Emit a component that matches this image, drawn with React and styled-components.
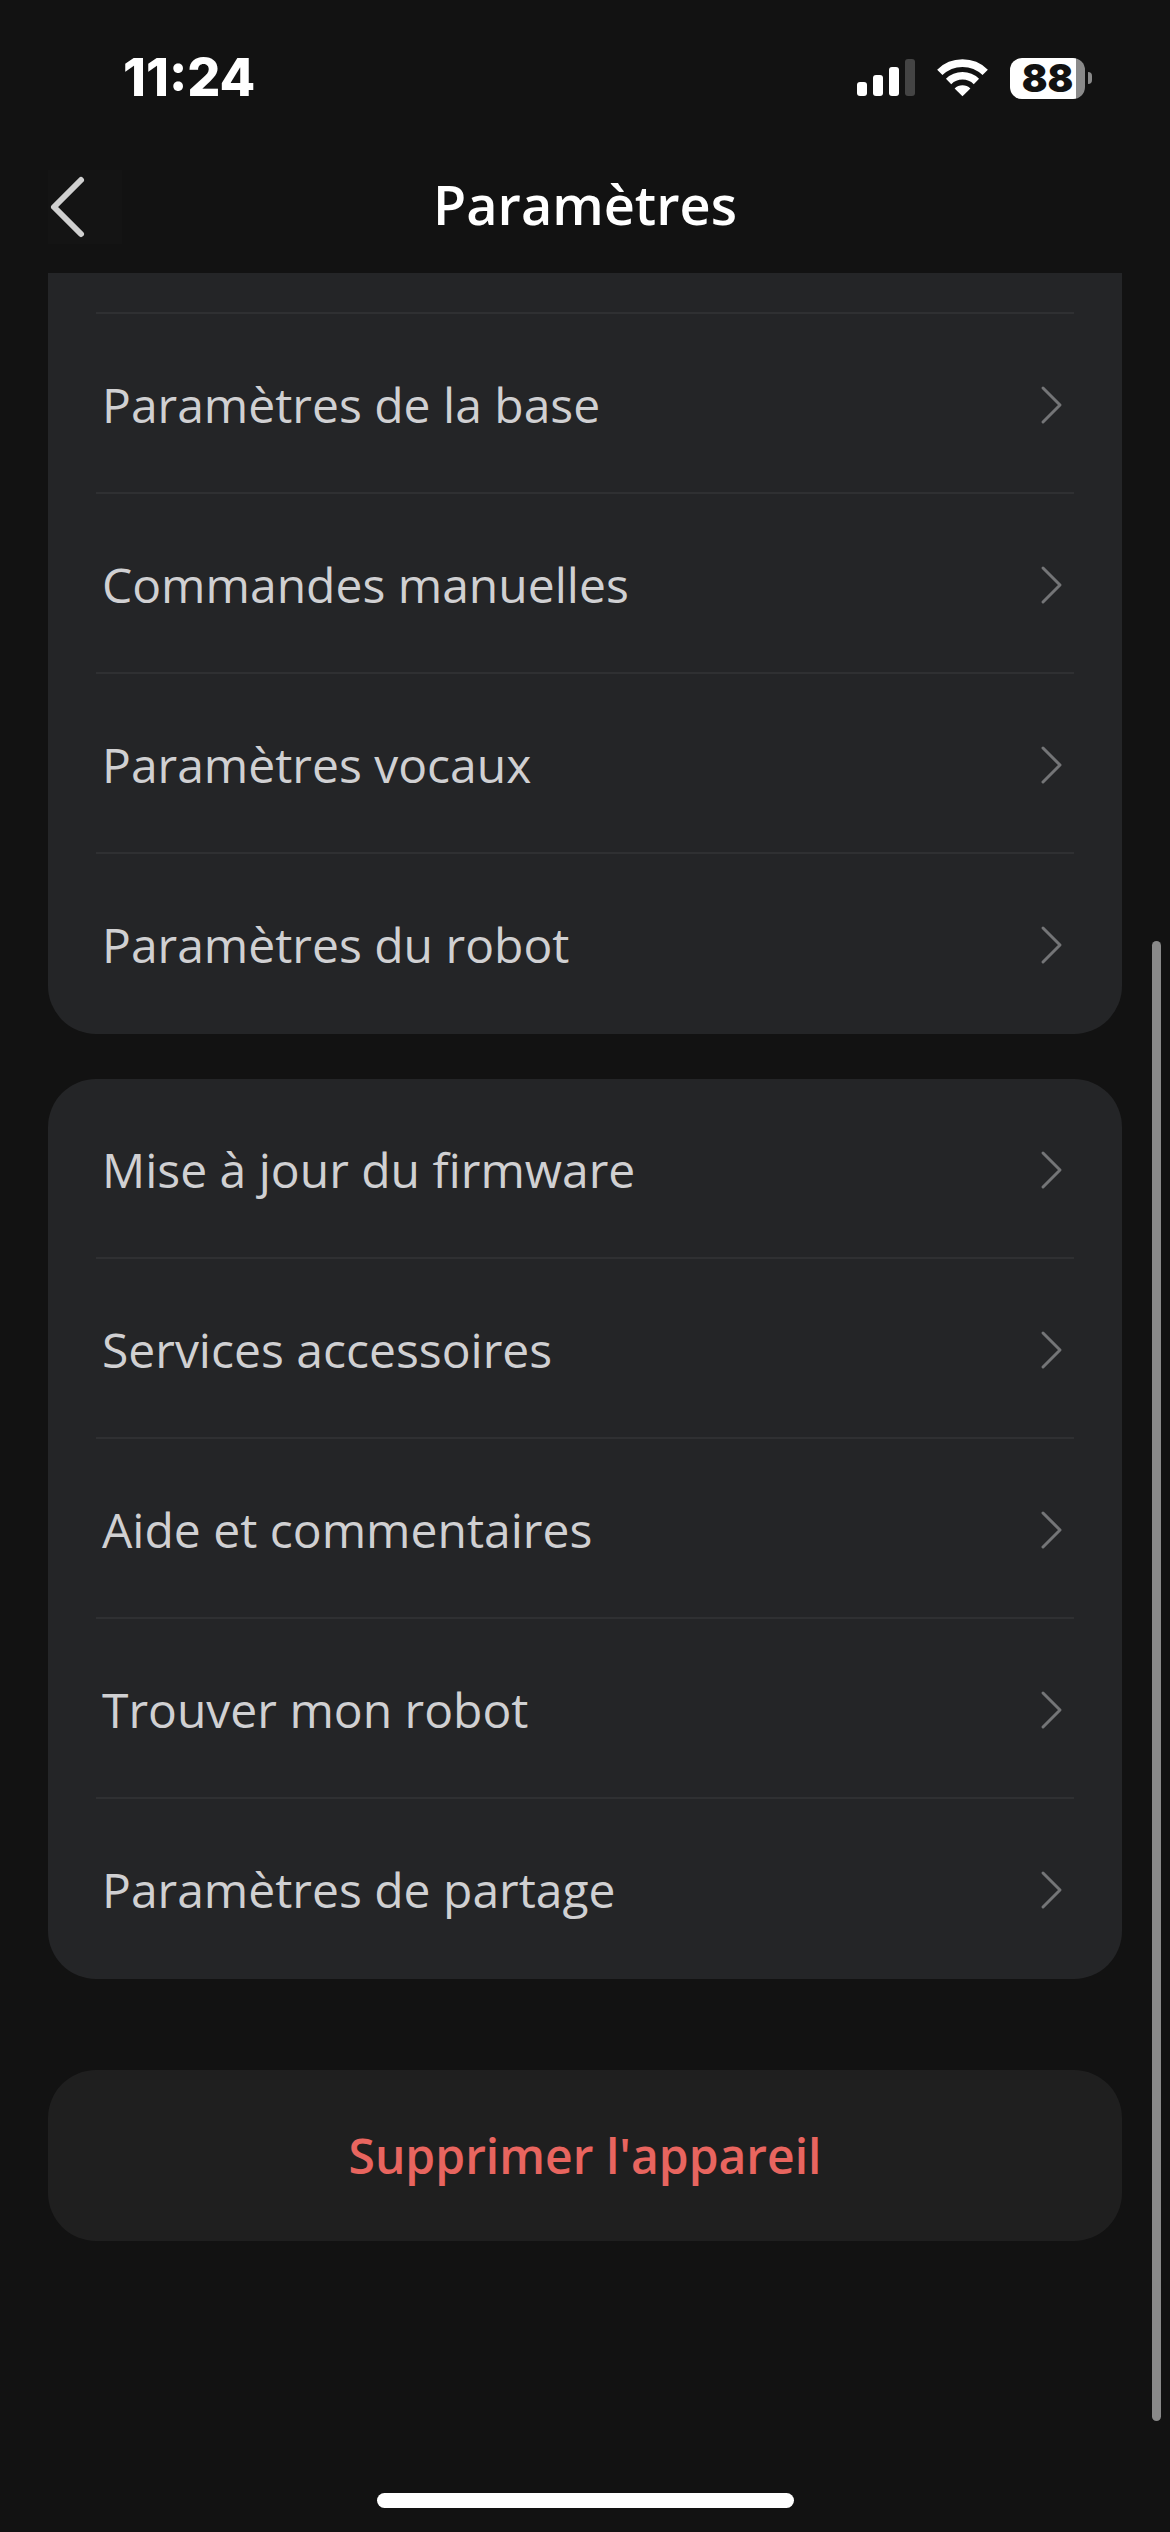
import React from 'react';
import styled, { createGlobalStyle } from 'styled-components';

const GlobalStyle = createGlobalStyle`
  * {
    box-sizing: border-box;
  }

  body {
    margin: 0;
    background-color: #121212;
    font-family: 'Open Sans', 'Noto Sans', sans-serif;
  }
`;

const Screen = styled.div`
  position: relative;
  display: flex;
  flex-direction: column;
  min-height: 100vh;
  background-color: #121212;
  color: #fff;
`;

const StatusBar = styled.div`
  display: flex;
  align-items: center;
  justify-content: space-between;
  height: 156px;
  padding: 0 78px 0 123px;
`;

const Time = styled.time`
  font-family: Inter, sans-serif;
  font-size: 52px;
  font-weight: 800;
  line-height: 60px;
`;

const StatusIcons = styled.div`
  display: flex;
  align-items: center;
  gap: 22px;
`;

const Battery = styled.div`
  display: flex;
  align-items: center;
  gap: 3px;
`;

const BatteryBody = styled.div`
  width: 75px;
  height: 41px;
  border-radius: 12px;
  background: linear-gradient(to right, #fff ${(props) => props.$level}%, #8a8a8a ${(props) => props.$level}%);
  color: #121212;
  font-family: Inter, sans-serif;
  font-size: 38px;
  font-weight: 900;
  line-height: 41px;
  text-align: center;
`;

const BatteryTip = styled.div`
  width: 4px;
  height: 12px;
  border-radius: 0 4px 4px 0;
  background-color: #8a8a8a;
`;

const Header = styled.header`
  display: grid;
  grid-template-columns: 74px 1fr 74px;
  align-items: center;
  height: 117px;
  padding: 0 48px 16px;
`;

const BackButton = styled.button`
  display: flex;
  align-items: center;
  width: 74px;
  height: 74px;
  padding: 0;
  border: 0;
  background-color: #141414;
  cursor: pointer;
`;

const Title = styled.h1`
  margin: 0;
  padding-bottom: 6px;
  font-size: 54px;
  font-weight: 600;
  line-height: 74px;
  text-align: center;
`;

const Content = styled.main`
  display: flex;
  flex: 1;
  flex-direction: column;
  padding: 0 48px;
`;

const Card = styled.ul`
  margin: 0 0 45px;
  padding: ${(props) => (props.$scrolled ? '39px 48px 2px' : '0 48px 2px')};
  border-radius: ${(props) => (props.$scrolled ? '0 0 48px 48px' : '48px')};
  background-color: #242527;
  list-style: none;
`;

const Item = styled.li`
  border-top: 2px solid #2f3032;

  &:first-child {
    border-top-width: ${(props) => (props.$divided ? '2px' : '0')};
  }
`;

const ItemButton = styled.button`
  display: flex;
  align-items: center;
  justify-content: space-between;
  width: 100%;
  height: 178px;
  padding: 4px 10px 0 6px;
  border: 0;
  background: none;
  color: #d0d0d2;
  font-family: inherit;
  font-size: 48px;
  line-height: 66px;
  text-align: left;
  cursor: pointer;
`;

const DeleteButton = styled.button`
  height: 171px;
  margin-top: 46px;
  padding: 0;
  border: 0;
  border-radius: 48px;
  background-color: #1f1f1f;
  color: #e8655f;
  font-family: inherit;
  font-size: 48px;
  font-weight: 600;
  line-height: 66px;
  cursor: pointer;
`;

const ScrollThumb = styled.div`
  position: absolute;
  top: 941px;
  right: 9px;
  bottom: 111px;
  width: 9px;
  border-radius: 5px;
  background-color: #898989;
`;

const HomeIndicator = styled.div`
  align-self: center;
  width: 417px;
  height: 15px;
  margin-bottom: 24px;
  border-radius: 8px;
  background-color: #fff;
`;

const robotItems = [
  'Paramètres de la base',
  'Commandes manuelles',
  'Paramètres vocaux',
  'Paramètres du robot',
];

const serviceItems = [
  'Mise à jour du firmware',
  'Services accessoires',
  'Aide et commentaires',
  'Trouver mon robot',
  'Paramètres de partage',
];

const SignalIcon = () => (
  <svg width="58" height="38" viewBox="0 0 58 38" fill="#fff" aria-hidden="true">
    <rect x="0" y="23" width="10" height="14" rx="3" />
    <rect x="16" y="16" width="10" height="21" rx="3" />
    <rect x="32" y="8" width="10" height="29" rx="3" />
    <rect x="48" y="0" width="10" height="37" rx="3" fill="#444" />
  </svg>
);

const WifiIcon = () => (
  <svg width="51" height="38" viewBox="0 0 51 38" aria-hidden="true">
    <g fill="none" stroke="#fff" strokeWidth="7.6">
      <path d="M2.8 13.4 A32.5 32.5 0 0 1 48.2 13.4" />
      <path d="M11.6 22.4 A20 20 0 0 1 39.4 22.4" />
    </g>
    <path d="M25.5 37.2 L17.6 29.4 A11.4 11.4 0 0 1 33.4 29.4 Z" fill="#fff" />
  </svg>
);

const BackIcon = () => (
  <svg width="40" height="74" viewBox="0 0 40 74" fill="none" aria-hidden="true">
    <path d="M33 10 L6 37 L33 64" stroke="#d0d0d0" strokeWidth="6" strokeLinecap="round" strokeLinejoin="round" />
  </svg>
);

const ChevronIcon = () => (
  <svg width="24" height="40" viewBox="0 0 24 40" fill="none" aria-hidden="true">
    <path d="M3 3 L20 20 L3 37" stroke="#747577" strokeWidth="3" strokeLinecap="round" strokeLinejoin="round" />
  </svg>
);

const SettingsList = ({ items, scrolled = false }) => (
  <Card $scrolled={scrolled}>
    {items.map((item) => (
      <Item key={item} $divided={scrolled}>
        <ItemButton type="button">
          {item}
          <ChevronIcon />
        </ItemButton>
      </Item>
    ))}
  </Card>
);

const App = () => (
  <>
    <GlobalStyle />
    <Screen>
      <StatusBar>
        <Time>11:24</Time>
        <StatusIcons>
          <SignalIcon />
          <WifiIcon />
          <Battery>
            <BatteryBody $level={88}>88</BatteryBody>
            <BatteryTip />
          </Battery>
        </StatusIcons>
      </StatusBar>
      <Header>
        <BackButton type="button" aria-label="Retour">
          <BackIcon />
        </BackButton>
        <Title>Paramètres</Title>
      </Header>
      <Content>
        <SettingsList items={robotItems} scrolled />
        <SettingsList items={serviceItems} />
        <DeleteButton type="button">Supprimer l&apos;appareil</DeleteButton>
      </Content>
      <ScrollThumb />
      <HomeIndicator />
    </Screen>
  </>
);

export default App;
